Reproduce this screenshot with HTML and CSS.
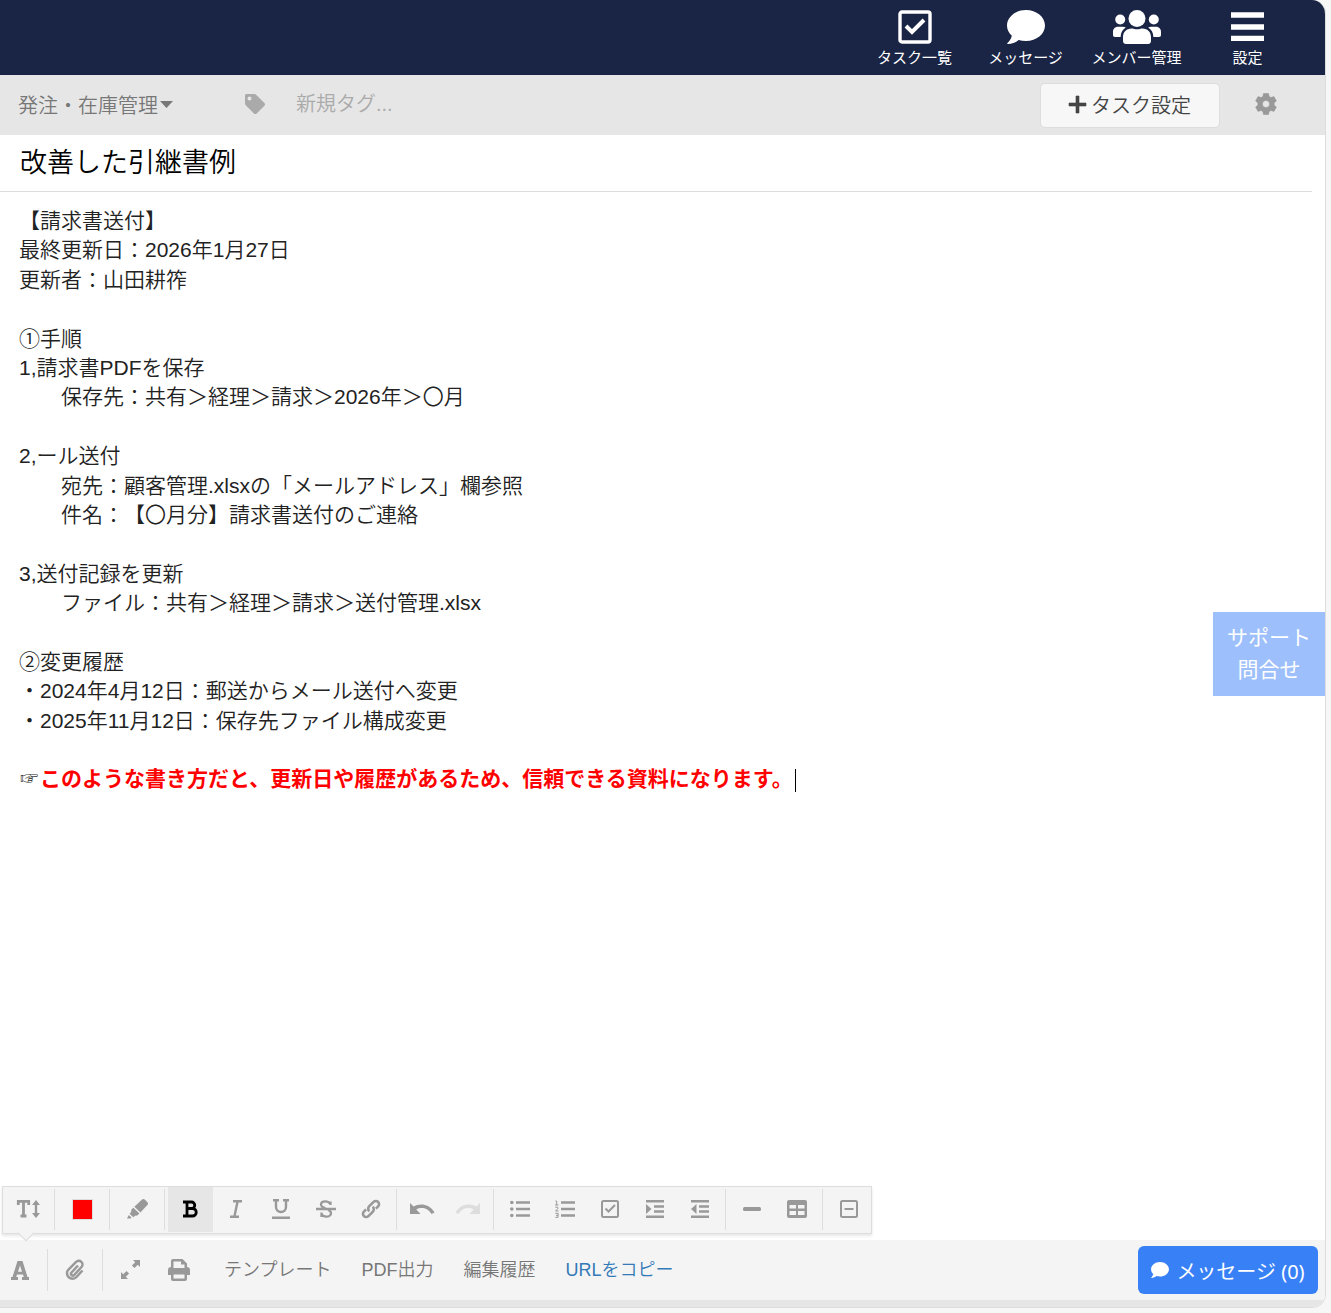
FILE: index.html
```
<!DOCTYPE html>
<html lang="ja">

<head>
    <meta charset="UTF-8">
    <title>改善した引継書例</title>
    <link rel="stylesheet" href="styles.css">
</head>

<body>

    <div class="window">

        <header class="topbar">
            <nav class="topnav">
                <a href="#">
                    <svg width="34" height="34" viewBox="0 0 34 34"><rect x="2" y="2" width="30" height="30" rx="2" fill="none" stroke="#fff" stroke-width="3.4"/><path d="M8 16l6 6L26 10" fill="none" stroke="#fff" stroke-width="4"/></svg>
                    <span>タスク一覧</span>
                </a>
                <a href="#">
                    <svg width="38" height="34" viewBox="0 0 38 34"><path d="M19 0C8.500 0 0 7 0 15.500c0 4 1.800 7.500 4.800 10.200C4.300 29 1.500 32 .4 33c-.4.500 0 1 .6 1 4 0 8-1.700 10.600-4 2.300.7 4.800 1 7.400 1 10.500 0 19-7 19-15.500S29.500 0 19 0z" fill="#fff"/></svg>
                    <span>メッセージ</span>
                </a>
                <a href="#">
                    <svg width="48" height="34" viewBox="0 0 48 34"><g fill="#fff"><circle cx="24" cy="8.500" r="8.500"/><circle cx="7.200" cy="9.500" r="5"/><circle cx="40.800" cy="9.500" r="5"/><path d="M10 31v-4c0-5 3.600-8.500 8.500-8.500 2 0 3 .8 5.500.8s3.500-.8 5.500-.8c4.900 0 8.500 3.500 8.500 8.500v4c0 2-1.300 3-3 3H13c-1.700 0-3-1-3-3zM0 25v-3c0-3 2-5.200 5-5.200h5c1 0 2 .3 2.800.8-3.200 2-5 5-5.200 9.400H2c-1.300 0-2-.8-2-2zM48 25v-3c0-3-2-5.200-5-5.200h-5c-1 0-2 .3-2.800.8 3.200 2 5 5 5.200 9.400H46c1.300 0 2-.8 2-2z"/></g></svg>
                    <span>メンバー管理</span>
                </a>
                <a href="#">
                    <svg width="34" height="34" viewBox="0 0 34 34"><path d="M0 2.300h33v5.400H0zM0 14.300h33v5.400H0zM0 25.700h33v5.300H0z" fill="#fff"/></svg>
                    <span>設定</span>
                </a>
            </nav>
        </header>

        <div class="tagbar">
            <button class="category" type="button">発注・在庫管理<svg width="13" height="7" viewBox="0 0 13 7"><path d="M0 0h13L6.500 7z" fill="#777"/></svg></button>
            <label class="tag-icon" for="tag"><svg width="20" height="20" viewBox="0 0 20 20"><path fill-rule="evenodd" d="M0 1.500C0 .6.600 0 1.500 0h8c.6 0 1.200.200 1.600.7l8.300 8.200c.8.8.8 2 0 2.800l-7.700 7.700c-.8.800-2 .8-2.800 0L.7 11.200C.2 10.700 0 10.200 0 9.600zM4.500 2.500a2 2 0 1 0 0 4 2 2 0 0 0 0-4z" fill="#aaa"/></svg></label>
            <input class="tag-input" id="tag" type="text" placeholder="新規タグ..." aria-label="新規タグ">
            <button class="task-button" type="button"><svg width="17" height="17" viewBox="0 0 17 17"><path d="M7 0h3v7h7v3h-7v7H7v-7H0V7h7z" fill="#444" stroke="#444" stroke-width=".6" stroke-linejoin="round"/></svg>タスク設定</button>
            <button class="gear" type="button" aria-label="タグ設定"><svg width="22" height="22" viewBox="-11 -11 22 22"><path fill-rule="evenodd" d="M-2.500-10.500h5l.6 3 1.900 1.100 2.900-1 2.500 4.300L8.100-1v2l2.300 2.100-2.500 4.300-2.900-1-1.900 1.100-.6 3h-5l-.6-3L-5 6.400l-2.900 1-2.500-4.300L-8.100 1v-2l-2.300-2.100 2.500-4.300 2.900 1 1.900-1.100zM0-3.600a3.600 3.600 0 1 0 0 7.200 3.600 3.600 0 0 0 0-7.200z" fill="#999" stroke="#999" stroke-width=".6"/></svg></button>
        </div>

        <main class="note">
            <h1>改善した引継書例</h1>
            <div class="note-body">
                <p>【請求書送付】</p>
                <p>最終更新日：2026年1月27日</p>
                <p>更新者：山田耕筰</p>
                <p><br></p>
                <p>①手順</p>
                <p>1,請求書PDFを保存</p>
                <p>　　保存先：共有＞経理＞請求＞2026年＞〇月</p>
                <p><br></p>
                <p>2,ール送付</p>
                <p>　　宛先：顧客管理.xlsxの「メールアドレス」欄参照</p>
                <p>　　件名：【〇月分】請求書送付のご連絡</p>
                <p><br></p>
                <p>3,送付記録を更新</p>
                <p>　　ファイル：共有＞経理＞請求＞送付管理.xlsx</p>
                <p><br></p>
                <p>②変更履歴</p>
                <p>・2024年4月12日：郵送からメール送付へ変更</p>
                <p>・2025年11月12日：保存先ファイル構成変更</p>
                <p><br></p>
                <p><span class="hand">☞</span><strong>このような書き方だと、更新日や履歴があるため、信頼できる資料になります。</strong><span class="caret"></span></p>
            </div>
        </main>

        <div class="format-row">
            <div class="format-bar">
                <div class="group">
                    <button type="button" aria-label="文字サイズ"><svg width="24" height="20" viewBox="0 0 24 20"><path d="M1.300 6V2.300h10.400V6M6.500 2v15M3.500 17h6" fill="none" stroke="#999" stroke-width="2.800"/><path d="M19 1l4 5h-2.800v8H23l-4 5-4-5h2.800V6H15z" fill="#999"/></svg></button>
                </div>
                <div class="group wide">
                    <button type="button" aria-label="文字色"><span class="swatch"></span></button>
                </div>
                <div class="group wide">
                    <button type="button" aria-label="マーカー"><svg width="22" height="20" viewBox="0 0 22 20"><path d="M15 .6c1-.8 2-.7 2.800 0l2.600 2.600c.8.800.8 2 0 2.800l-7 7.500-6-5.700zM6.400 8.700l6 5.700-2.200 2-2.300.3-1.600 1.500-3.700-3.500L4.200 13v-2.200zM1.800 15.900l2.700 2.600-1 .9H0z" fill="#999"/></svg></button>
                </div>
                <div class="group">
                    <button class="active" type="button" aria-label="太字"><svg width="16" height="18" viewBox="0 0 16 18"><path d="M0 2h8.500a3.200 3.200 0 0 1 0 6.500H4M8.500 8.500h1a3.700 3.700 0 0 1 0 7.500H0M4 2v14" fill="none" stroke="#000" stroke-width="2.800"/></svg></button>
                    <button type="button" aria-label="斜体"><svg width="14" height="18" viewBox="0 0 14 18"><path d="M4 1.300h9M1 16.700h9M8.700 1L5.300 17" fill="none" stroke="#999" stroke-width="2.400"/></svg></button>
                    <button type="button" aria-label="下線"><svg width="18" height="20" viewBox="0 0 18 20"><path d="M1 1.200h6M11 1.200h6M4 1v7a5 5 0 0 0 10 0V1M0 18.800h18" fill="none" stroke="#999" stroke-width="2.400"/></svg></button>
                    <button type="button" aria-label="取り消し線"><svg width="20" height="18" viewBox="0 0 20 18"><path d="M14.500 5V1.500M14.500 4C13 2 11.500 1.300 9.500 1.300c-3 0-4.500 1.500-4.500 3.300 0 2 2 3 4.500 3.800M12 10c2 .6 3 1.500 3 3.200 0 2-2 3.500-4.700 3.500-2.300 0-3.800-1-4.800-2.700M5.500 12.500V17M0 9h20" fill="none" stroke="#999" stroke-width="2.300"/></svg></button>
                    <button type="button" aria-label="リンク"><svg width="20" height="20" viewBox="0 0 20 20"><path d="M8.300 12.300a3.600 3.600 0 0 1 0-5.100l4.300-4.300a3.100 3.100 0 0 1 4.500 4.500l-2.200 2.200M11.700 7.700a3.600 3.600 0 0 1 0 5.100l-4.300 4.300a3.100 3.100 0 0 1-4.500-4.500l2.200-2.200" fill="none" stroke="#999" stroke-width="2.600"/></svg></button>
                </div>
                <div class="group">
                    <button type="button" aria-label="元に戻す"><svg width="25" height="12" viewBox="0 0 25 12"><path d="M0 0l3.600 3.500C9 .2 19 0 24.600 9.500L21.500 11C17.500 4.500 11 4 6.300 6.500l4.200 4.500H0z" fill="#999"/></svg></button>
                    <button type="button" aria-label="やり直す" disabled><svg width="25" height="12" viewBox="0 0 25 12"><path d="M25 0l-3.600 3.500C16 .2 6 0 .4 9.500L3.500 11c4-6.500 10.500-7 15.200-4.500L14.500 11H25z" fill="#ddd"/></svg></button>
                </div>
                <div class="group">
                    <button type="button" aria-label="箇条書き"><svg width="20" height="18" viewBox="0 0 20 18"><path d="M6 2.500h14M6 9h14M6 15.500h14" stroke="#999" stroke-width="2.400"/><g fill="#999"><circle cx="1.800" cy="2.500" r="1.800"/><circle cx="1.800" cy="9" r="1.800"/><circle cx="1.800" cy="15.500" r="1.800"/></g></svg></button>
                    <button type="button" aria-label="番号リスト"><svg width="20" height="18" viewBox="0 0 20 18"><path d="M6 2.500h14M6 9h14M6 15.500h14" stroke="#999" stroke-width="2.400"/><path d="M.5 1h1.200v4M0 5h3.500M.3 7.200h2.500v1.500L.6 11h3M.3 13.300h2.800v4H.3M1 15.300h2" fill="none" stroke="#999"/></svg></button>
                    <button type="button" aria-label="チェックリスト"><svg width="18" height="18" viewBox="0 0 18 18"><rect x="1" y="1" width="16" height="16" rx="1.500" fill="none" stroke="#999" stroke-width="2"/><path d="M4.500 8.500l3 3L14 5" fill="none" stroke="#999" stroke-width="2"/></svg></button>
                    <button type="button" aria-label="字下げ"><svg width="18" height="18" viewBox="0 0 18 18"><path d="M0 1.300h18M8 6.500h10M8 11.500h10M0 16.700h18" stroke="#999" stroke-width="2.400"/><path d="M0 4l5.500 5L0 14z" fill="#999"/></svg></button>
                    <button type="button" aria-label="字上げ"><svg width="18" height="18" viewBox="0 0 18 18"><path d="M0 1.300h18M8 6.500h10M8 11.500h10M0 16.700h18" stroke="#999" stroke-width="2.400"/><path d="M5.500 4L0 9l5.500 5z" fill="#999"/></svg></button>
                </div>
                <div class="group">
                    <button type="button" aria-label="区切り線"><svg width="18" height="4" viewBox="0 0 18 4"><rect width="18" height="4" rx="1.500" fill="#999"/></svg></button>
                    <button type="button" aria-label="表"><svg width="20" height="18" viewBox="0 0 20 18"><path fill-rule="evenodd" d="M2 0h16a2 2 0 0 1 2 2v14a2 2 0 0 1-2 2H2a2 2 0 0 1-2-2V2c0-1.100.9-2 2-2zM2.500 5v3.500H9V5zM11 5v3.500h6.500V5zM2.500 11v4H9v-4zM11 11v4h6.500v-4z" fill="#999"/></svg></button>
                </div>
                <div class="group">
                    <button type="button" aria-label="折りたたみ"><svg width="18" height="18" viewBox="0 0 18 18"><rect x="1" y="1" width="16" height="16" rx="1.500" fill="none" stroke="#999" stroke-width="2"/><path d="M4.500 9h9" stroke="#999" stroke-width="2"/></svg></button>
                </div>
            </div>
        </div>

        <footer class="footer">
            <div class="footer-tools">
                <button type="button" aria-label="書式"><svg width="18" height="19" viewBox="0 0 18 19"><path fill-rule="evenodd" d="M6.500 0h5l5 16H18v3h-7v-3h1.800l-.8-2.500H6L5.200 16H7v3H0v-3h1.500zM9 4.500L7 10.700h4z" fill="#999"/></svg></button>
                <button type="button" aria-label="添付ファイル"><svg width="20" height="22" viewBox="0 0 20 22"><path d="M13 6.500l-6.500 7a1.800 1.800 0 0 0 2.700 2.500l7.300-8a3.600 3.600 0 0 0-5.400-5L3.500 10.500a5.400 5.400 0 0 0 8 7.500l6-6.500" fill="none" stroke="#999" stroke-width="2.500"/></svg></button>
                <button type="button" aria-label="全画面"><svg width="20" height="20" viewBox="0 0 20 20"><path d="M12 0h7v7l-2.200-2.200-3.300 3.300-2.600-2.600L14.200 2.200zM0 19v-7l2.200 2.200 3.300-3.300 2.600 2.600-3.300 3.300L7 19z" fill="#999"/></svg></button>
                <button type="button" aria-label="印刷"><svg width="22" height="22" viewBox="0 0 22 22"><path fill-rule="evenodd" d="M3 8V2c0-1.200.8-2 2-2h9.500L19 4.500V8c1.800 0 3 1.200 3 3v5h-3v4c0 1-.8 2-2 2H5c-1.200 0-2-1-2-2v-4H0v-5c0-1.800 1.200-3 3-3zM5.500 2.500V9h11V5.500H13v-3zM5.500 15.500v4h11v-4z" fill="#999"/></svg></button>
            </div>
            <div class="footer-links">
                <a href="#">テンプレート</a>
                <a href="#">PDF出力</a>
                <a href="#">編集履歴</a>
                <a class="copy" href="#">URLをコピー</a>
            </div>
            <button class="message-button" type="button"><svg width="18" height="16" viewBox="0 0 38 34"><path d="M19 0C8.500 0 0 7 0 15.500c0 4 1.800 7.500 4.800 10.200C4.300 29 1.500 32 .4 33c-.4.500 0 1 .6 1 4 0 8-1.700 10.600-4 2.300.7 4.800 1 7.400 1 10.500 0 19-7 19-15.500S29.500 0 19 0z" fill="#fff"/></svg>メッセージ (0)</button>
        </footer>

        <a class="support" href="#">サポート<br>問合せ</a>

    </div>

</body>

</html>
```
FILE: styles.css
```
* {
    box-sizing: border-box;
}

body {
    margin: 0;
    height: 100vh;
    padding: 0 5px 5px 0;
    background-color: #f7f7f7;
    font-family: "Liberation Sans", "Noto Sans CJK JP", sans-serif;
    font-weight: 350;
    color: #222;
    text-spacing-trim: space-all;
}

a {
    color: inherit;
    text-decoration: none;
}

button {
    display: flex;
    align-items: center;
    justify-content: center;
    padding: 0;
    border: 0;
    background: none;
    font: inherit;
    color: inherit;
}

svg {
    display: block;
    flex: none;
    overflow: visible;
}

.window {
    position: relative;
    display: flex;
    flex-direction: column;
    height: 100%;
    overflow: hidden;
    border-right: 1px solid #ddd;
    border-bottom: 1px solid #ddd;
    border-radius: 0 14px 14px 0;
    background-color: #fff;
}

/* top navigation */
.topbar {
    display: flex;
    justify-content: flex-end;
    height: 75px;
    padding-right: 22px;
    background-color: #1a2444;
}

.topnav {
    display: grid;
    grid-template-columns: repeat(4, 111px);
}

.topnav a {
    display: flex;
    flex-direction: column;
    align-items: center;
    padding-top: 10px;
    color: #fff;
    font-size: 15px;
    font-weight: 400;
    line-height: 28px;
}

/* category and tags */
.tagbar {
    display: flex;
    align-items: center;
    height: 60px;
    padding: 0 48px 2px 18px;
    background-color: #e6e6e6;
    color: #777;
    font-size: 20px;
}

.category svg {
    margin-left: 2px;
}

.tag-icon {
    margin: 0 31px 0 72px;
}

.tag-input {
    flex: 1;
    min-width: 0;
    padding: 0;
    border: 0;
    outline: 0;
    background: none;
    font: inherit;
}

.tag-input::placeholder {
    color: #aaa;
}

.task-button {
    gap: 5px;
    width: 180px;
    height: 45px;
    margin-top: 2px;
    padding-bottom: 2px;
    border: 1px solid #ddd;
    border-radius: 5px;
    background-color: #f7f7f7;
    color: #444;
}

.gear {
    margin-left: 35px;
}

/* note */
.note {
    flex: 1;
    min-height: 0;
    overflow: hidden;
}

.note h1 {
    margin: 0 13px 0 0;
    padding-left: 20px;
    border-bottom: 1px solid #ddd;
    color: #000;
    font-size: 27px;
    font-weight: 350;
    line-height: 56px;
}

.note-body {
    padding: 14px 19px;
    font-size: 21px;
    line-height: 1.4;
}

.note-body p {
    margin: 0;
}

.note-body strong {
    color: #f00;
    font-weight: 700;
}

.hand {
    display: inline-block;
    width: 21px;
    font-family: "DejaVu Sans", sans-serif;
}

.caret {
    display: inline-block;
    width: 1px;
    height: 23px;
    margin-left: 2px;
    background-color: #000;
    vertical-align: middle;
}

/* formatting toolbar */
.format-row {
    display: flex;
    padding: 0 2px 6px;
}

.format-bar {
    position: relative;
    display: flex;
    height: 48px;
    border: 1px solid #ddd;
    background-color: #f4f4f4;
    box-shadow: 0 2px 3px rgba(0, 0, 0, 0.1);
}

.format-bar::after {
    content: "";
    position: absolute;
    z-index: 1;
    left: 17px;
    bottom: -6px;
    width: 11px;
    height: 11px;
    border: solid #ddd;
    border-width: 0 1px 1px 0;
    background-color: #f4f4f4;
    transform: rotate(45deg);
}

.group {
    display: flex;
    padding: 0 3px;
}

.group.wide {
    padding: 0 4px 0 5px;
}

.group:last-child {
    padding-right: 0;
}

.group + .group {
    border-left: 1px solid #ddd;
    border-image: linear-gradient(transparent 3px, #ddd 3px, #ddd 42px, transparent 42px) 1;
}

.group button {
    width: 45px;
    height: 45px;
    padding-bottom: 1px;
}

.group .active {
    background-color: #e6e6e6;
}

.swatch {
    width: 21px;
    height: 21px;
    border: 1px solid #ddd;
    background-color: #f00;
}

/* footer */
.footer {
    display: flex;
    align-items: center;
    height: 67px;
    padding-right: 7px;
    border-bottom: 7px solid #e6e6e6;
    background-color: #f4f4f4;
    color: #777;
    font-size: 18px;
}

.footer-tools {
    display: flex;
}

.footer-tools button {
    width: 55px;
    height: 42px;
}

.footer-tools button:first-child {
    width: 48px;
    padding-right: 7px;
}

.footer-tools button:nth-child(-n+2) {
    border-right: 1px solid #ddd;
}

.footer-tools button:last-child {
    width: 42px;
}

.footer-links {
    display: flex;
    gap: 30px;
    margin-left: 24px;
    padding-bottom: 5px;
}

.footer-links .copy {
    color: #337ab7;
}

.message-button {
    gap: 7px;
    width: 180px;
    height: 48px;
    margin-left: auto;
    border-radius: 6px;
    background-color: #3880f6;
    color: #fff;
    font-family: "Noto Sans", "Noto Sans CJK JP", sans-serif;
    font-size: 20px;
    font-weight: 400;
}

.support {
    position: absolute;
    right: 0;
    top: 612px;
    width: 112px;
    padding: 10px 0;
    background-color: #9dbffb;
    color: #fff;
    font-size: 21px;
    font-weight: 400;
    line-height: 32px;
    text-align: center;
}
```
